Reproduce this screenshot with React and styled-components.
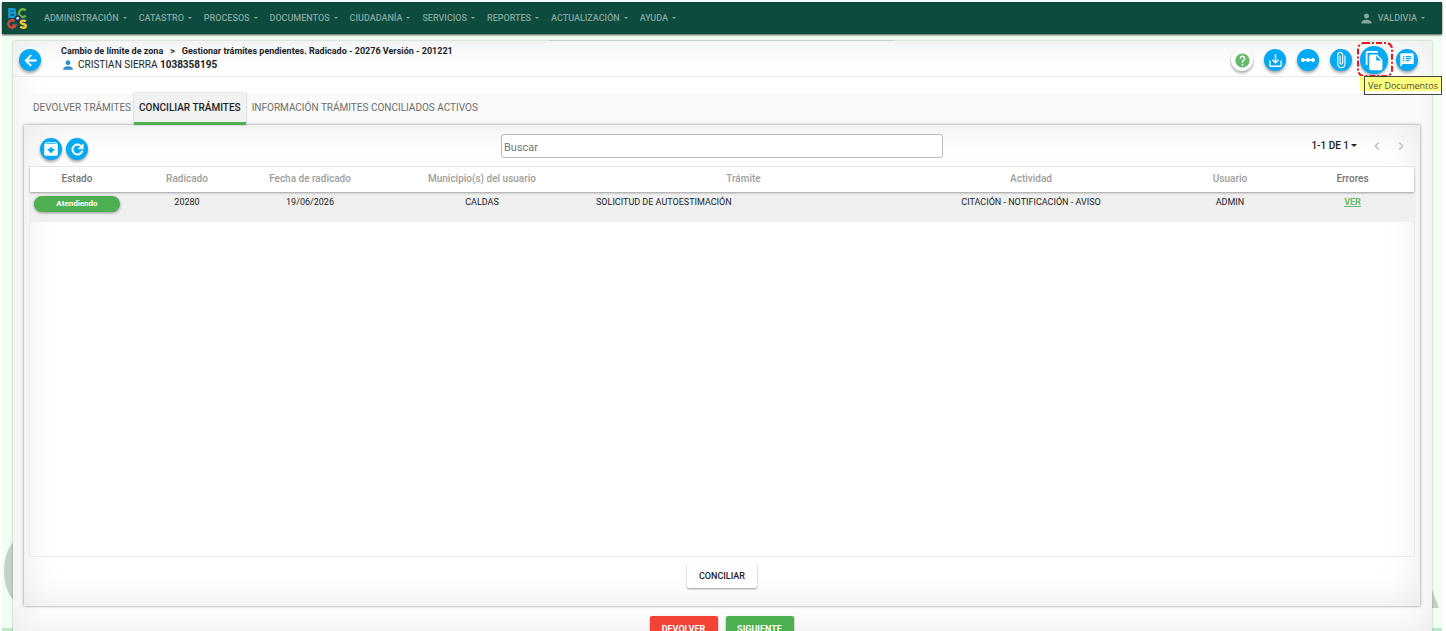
import React from "react";
import styled, { createGlobalStyle } from "styled-components";
import {
  MdArchive,
  MdArrowBack,
  MdAttachFile,
  MdChevronLeft,
  MdChevronRight,
  MdFileCopy,
  MdHelp,
  MdLinearScale,
  MdPerson,
  MdRefresh,
  MdSaveAlt,
  MdSpeakerNotes,
} from "react-icons/md";

const GlobalStyle = createGlobalStyle`
  * { box-sizing: border-box; }
  html, body { margin: 0; background: #fff; overflow: hidden; }
  body { font-family: Roboto, "Liberation Sans", sans-serif; font-size: 10px; color: #212529; }
  button, input { font-family: inherit; }
  button { cursor: pointer; }
`;

const Page = styled.div`
  display: flex;
  flex-direction: column;
  height: 100vh;
  padding: 2px 4px 0 2px;
  overflow: hidden;
`;

const NavBar = styled.header`
  position: relative;
  display: flex;
  align-items: center;
  flex: none;
  height: 32px;
  padding: 0 17px 0 5px;
  background: #0c4b3e;
  box-shadow: 0 1px 2px rgba(0, 0, 0, 0.7);
  z-index: 1;
`;

const Menu = styled.nav`
  display: flex;
  flex: 1;
  gap: 12px;
  margin-left: 16px;
`;

const MenuButton = styled.button`
  display: flex;
  align-items: center;
  gap: 4px;
  padding: 0;
  border: 0;
  background: none;
  color: #86a59f;
  font-size: 9px;
  font-weight: 500;
  line-height: 16px;
  white-space: nowrap;
`;

const Caret = styled.span`
  border: ${(p) => p.$size || 2}px solid transparent;
  border-top-color: currentColor;
  border-bottom: 0;
`;

const Backdrop = styled.div`
  position: relative;
  flex: 1;
  min-height: 0;
  padding: 7px 10px 0 11px;
  background: #f0fff2;
`;

const Watermark = styled.svg`
  position: absolute;
  bottom: 0;
  ${(p) => p.$side}: 0;
  width: 24px;
  height: 90px;
`;

const TopLine = styled.div`
  position: absolute;
  top: 6px;
  left: 38%;
  right: 38%;
  height: 1px;
  background: #d9e8dc;
`;

const Panel = styled.main`
  position: relative;
  height: 100%;
  background: #fff;
  box-shadow: inset 0 0 36px rgba(0, 0, 0, 0.09), 0 0 2px rgba(0, 0, 0, 0.3);
`;

const PanelHeader = styled.div`
  display: flex;
  align-items: center;
  height: 36px;
  padding: 3px 14px 0 6px;
  border-bottom: 1px solid #e9e9e9;
`;

const TitleBlock = styled.div`
  flex: 1;
  margin: 0 0 4px 20px;
  line-height: 14px;
`;

const Title = styled.h1`
  margin: 0;
  font-size: 9px;
  line-height: 14px;
  font-weight: 700;
`;

const Separator = styled.span`
  margin: 0 7px;
`;

const Person = styled.div`
  display: flex;
  align-items: center;
  gap: 3px;
  svg { color: #2b8fd0; }
`;

const Actions = styled.div`
  display: flex;
  align-items: center;
  gap: 11px;
`;

const RoundButton = styled.button`
  display: flex;
  align-items: center;
  justify-content: center;
  flex: none;
  width: ${(p) => p.$size || 22}px;
  height: ${(p) => p.$size || 22}px;
  padding: 0;
  border: 0;
  border-radius: 50%;
  background: ${(p) => (p.$light ? "#fff" : "#03a9f4")};
  color: ${(p) => (p.$light ? "#66bb6a" : "#fff")};
  box-shadow: 0 2px 3px rgba(0, 0, 0, 0.35);
  svg path:not([fill="none"]) {
    stroke: currentColor;
    stroke-width: ${(p) => (p.$bold ? 1 : 0)}px;
  }
`;

const Highlighted = styled.div`
  position: relative;
  display: flex;
  margin: 0 -3px;
`;

const Marker = styled.svg`
  position: absolute;
  top: -4px;
  left: -3px;
  width: 36px;
  height: 36px;
  pointer-events: none;
`;

const Tooltip = styled.div`
  position: absolute;
  top: 30px;
  left: 4px;
  z-index: 2;
  width: 78px;
  height: 19px;
  border: 1px solid #444;
  background: linear-gradient(#ffff80 14px, #fff 14px);
  font: 9px/18px "Open Sans", "Noto Sans", sans-serif;
  color: #4b4b35;
  text-align: center;
  white-space: nowrap;
  &::before {
    content: "";
    position: absolute;
    top: -1px;
    right: 100%;
    width: 4px;
    height: 15px;
    margin-right: 1px;
    background: #ffff80;
  }
`;

const Tabs = styled.div`
  display: flex;
  height: 32px;
  margin: 16px 12px 0 11px;
  background: #fafafa;
`;

const Tab = styled.button`
  padding: 0 ${(p) => (p.$active ? 5 : 6)}px;
  border: 0;
  border-bottom: 3px solid ${(p) => (p.$active ? "#4caf50" : "transparent")};
  background: ${(p) => (p.$active ? "#f2f2f2" : "none")};
  box-shadow: ${(p) => (p.$active ? "0 0 2px rgba(0, 0, 0, 0.3)" : "none")};
  color: ${(p) => (p.$active ? "#212529" : "#6c6c6c")};
  font-size: 10px;
  font-weight: ${(p) => (p.$active ? 500 : 400)};
  white-space: nowrap;
  &:first-child { padding: 0 3px 0 9px; }
`;

const Card = styled.section`
  display: flex;
  flex-direction: column;
  height: 481px;
  margin: 0 12px 0 11px;
  padding: 0 5px;
  background: #fff;
  box-shadow: inset 0 0 36px rgba(0, 0, 0, 0.1), 0 0 3px rgba(0, 0, 0, 0.45);
`;

const Toolbar = styled.div`
  display: grid;
  grid-template-columns: 1fr 442px 1fr;
  align-items: center;
  height: 41px;
  padding: 0 6px;
`;

const ToolGroup = styled.div`
  display: flex;
  gap: 4px;
  padding: 7px 0 0 5px;
`;

const Search = styled.input`
  height: 24px;
  padding: 4px 2px 1px;
  border: 1px solid #b5b9c0;
  border-radius: 3px;
  background: #fff;
  font-size: 11px;
  &::placeholder { color: #757575; opacity: 1; }
`;

const Pager = styled.div`
  display: flex;
  align-items: center;
  justify-content: flex-end;
  gap: 8px;
`;

const PagerButton = styled.button`
  display: flex;
  align-items: center;
  gap: 2px;
  padding: 0;
  border: 0;
  background: none;
  color: ${(p) => (p.disabled ? "#bbb" : "#212121")};
  font-size: 10px;
  font-weight: 500;
  &:first-child { padding-right: 4px; }
`;

const TableFrame = styled.div`
  flex: none;
  height: 391px;
  border: 1px solid #ececec;
`;

const Table = styled.table`
  width: 100%;
  table-layout: fixed;
  border-collapse: collapse;
`;

const Col = styled.col`
  width: ${(p) => p.$width};
`;

const HeadRow = styled.tr`
  position: relative;
  height: 25px;
  background: #fff;
  box-shadow: 0 1px 2px rgba(0, 0, 0, 0.35);
`;

const HeadCell = styled.th`
  padding: 0 0 3px;
  color: ${(p) => (p.$strong ? "#757575" : "#9e9e9e")};
  font-size: 10px;
  font-weight: 500;
`;

const BodyRow = styled.tr`
  height: 30px;
  background: #f0f0f0;
`;

const Cell = styled.td`
  padding: 4px 2px 0;
  text-align: ${(p) => (p.$left ? "left" : "center")};
  vertical-align: top;
  font-size: 9px;
  line-height: 13px;
  white-space: nowrap;
`;

const Status = styled.span`
  display: block;
  width: 86px;
  height: 16px;
  margin-left: 2px;
  border-radius: 8px;
  background: #4caf50;
  color: #fff;
  font-size: 8px;
  line-height: 16px;
  font-weight: 700;
  box-shadow: 0 1px 3px rgba(0, 0, 0, 0.4);
`;

const ErrorLink = styled.a`
  color: #66bb6a;
  font-size: 9px;
  font-weight: 700;
`;

const ActionButton = styled.button`
  width: ${(p) => p.$width}px;
  height: 25px;
  padding: 0;
  border: 0;
  border-radius: 2px;
  background: ${(p) => p.$bg};
  color: ${(p) => p.$fg};
  font-size: 9px;
  font-weight: ${(p) => p.$weight || 500};
  box-shadow: 0 1px 2px rgba(0, 0, 0, 0.4);
`;

const CardFooter = styled.div`
  display: flex;
  justify-content: center;
  padding-top: 6px;
`;

const PageFooter = styled.div`
  display: flex;
  justify-content: center;
  gap: 8px;
  padding: 10px 2px 0 0;
`;

const menus = [
  "ADMINISTRACIÓN",
  "CATASTRO",
  "PROCESOS",
  "DOCUMENTOS",
  "CIUDADANÍA",
  "SERVICIOS",
  "REPORTES",
  "ACTUALIZACIÓN",
  "AYUDA",
];

const columns = [
  { label: "Estado", width: "94px", strong: true },
  { label: "Radicado", width: "126px" },
  { label: "Fecha de radicado", width: "120px" },
  { label: "Municipio(s) del usuario", width: "224px" },
  { label: "Trámite", width: "auto" },
  { label: "Actividad", width: "276px" },
  { label: "Usuario", width: "122px" },
  { label: "Errores", width: "123px", strong: true },
];

function Logo() {
  return (
    <svg width="21" height="24" viewBox="0 0 21 24" fill="none" strokeWidth="2.4" role="img" aria-label="BCGS">
      <path d="M2.4 3.2v7.6h4a2 2 0 0 0 0-4h-4h3.6a1.8 1.8 0 0 0 0-3.6z" stroke="#149bd8" />
      <path d="M18.8 4.6a3.9 3.9 0 1 0 0 5" stroke="#6fae45" />
      <path d="M7.6 15.2a3.7 3.7 0 1 0 .9 4.2H5.4" stroke="#d3473d" />
      <path d="M18.8 15.4c-1.6-1.3-5-1-5 .9 0 2.3 5 1 5 3.6 0 2.2-3.8 2.3-5.6.8" stroke="#f0c63c" />
      <path d="M7.6 12.4a3.1 3.1 0 0 1 6.2 0c0 2-3.1 5-3.1 5s-3.1-3-3.1-5z" fill="#14365f" />
      <circle cx="10.7" cy="12.2" r="1.3" fill="#fff" />
    </svg>
  );
}

export default function App() {
  return (
    <Page>
      <GlobalStyle />
      <NavBar>
        <Logo />
        <Menu>
          {menus.map((name) => (
            <MenuButton key={name}>
              {name}
              <Caret />
            </MenuButton>
          ))}
        </Menu>
        <MenuButton>
          <MdPerson size={15} />
          VALDIVIA
          <Caret />
        </MenuButton>
      </NavBar>
      <Backdrop>
        <Watermark $side="left" viewBox="0 0 24 90" aria-hidden="true">
          <ellipse cx="24" cy="30" rx="22" ry="36" fill="#c4d1c6" />
          <path d="M0 87h24v3H0z" fill="#bde8cb" />
        </Watermark>
        <Watermark $side="right" viewBox="0 0 24 90" aria-hidden="true">
          <path d="M7 30L21 67H7z" fill="#c4d1c6" />
          <path d="M0 87h24v3H0z" fill="#bde8cb" />
        </Watermark>
        <TopLine />
        <Panel>
          <PanelHeader>
            <RoundButton $bold aria-label="Volver">
              <MdArrowBack size={17} />
            </RoundButton>
            <TitleBlock>
              <Title>
                Cambio de límite de zona
                <Separator>&gt;</Separator>
                Gestionar trámites pendientes. Radicado - 20276 Versión - 201221
              </Title>
              <Person>
                <MdPerson size={14} />
                <span>
                  CRISTIAN SIERRA <b>1038358195</b>
                </span>
              </Person>
            </TitleBlock>
            <Actions>
              <RoundButton $light aria-label="Ayuda">
                <MdHelp size={17} />
              </RoundButton>
              <RoundButton aria-label="Descargar">
                <MdSaveAlt size={17} />
              </RoundButton>
              <RoundButton $bold aria-label="Flujo">
                <MdLinearScale size={16} />
              </RoundButton>
              <RoundButton aria-label="Adjuntos">
                <MdAttachFile size={18} />
              </RoundButton>
              <Highlighted>
                <RoundButton $size={28} aria-label="Ver Documentos">
                  <MdFileCopy size={21} />
                </RoundButton>
                <Marker viewBox="0 0 36 36" aria-hidden="true">
                  <rect x="1" y="1" width="34" height="33" rx="6" fill="none" stroke="#f0141e" strokeWidth="2" strokeDasharray="6 2 2 2" />
                </Marker>
                <Tooltip role="tooltip">Ver Documentos</Tooltip>
              </Highlighted>
              <RoundButton aria-label="Observaciones">
                <MdSpeakerNotes size={16} />
              </RoundButton>
            </Actions>
          </PanelHeader>
          <Tabs role="tablist">
            <Tab role="tab">DEVOLVER TRÁMITES</Tab>
            <Tab role="tab" $active aria-selected="true">
              CONCILIAR TRÁMITES
            </Tab>
            <Tab role="tab">INFORMACIÓN TRÁMITES CONCILIADOS ACTIVOS</Tab>
          </Tabs>
          <Card>
            <Toolbar>
              <ToolGroup>
                <RoundButton aria-label="Archivar">
                  <MdArchive size={18} />
                </RoundButton>
                <RoundButton $bold aria-label="Actualizar">
                  <MdRefresh size={17} />
                </RoundButton>
              </ToolGroup>
              <Search type="text" placeholder="Buscar" aria-label="Buscar" />
              <Pager>
                <PagerButton>
                  1-1 DE 1
                  <Caret $size={3} />
                </PagerButton>
                <PagerButton disabled aria-label="Anterior">
                  <MdChevronLeft size={16} />
                </PagerButton>
                <PagerButton disabled aria-label="Siguiente página">
                  <MdChevronRight size={16} />
                </PagerButton>
              </Pager>
            </Toolbar>
            <TableFrame>
              <Table>
                <colgroup>
                  {columns.map((c) => (
                    <Col key={c.label} $width={c.width} />
                  ))}
                </colgroup>
                <thead>
                  <HeadRow>
                    {columns.map((c) => (
                      <HeadCell key={c.label} $strong={c.strong}>
                        {c.label}
                      </HeadCell>
                    ))}
                  </HeadRow>
                </thead>
                <tbody>
                  <BodyRow>
                    <Cell>
                      <Status>Atendiendo</Status>
                    </Cell>
                    <Cell>20280</Cell>
                    <Cell>19/06/2026</Cell>
                    <Cell>CALDAS</Cell>
                    <Cell $left>SOLICITUD DE AUTOESTIMACIÓN</Cell>
                    <Cell>CITACIÓN - NOTIFICACIÓN - AVISO</Cell>
                    <Cell>ADMIN</Cell>
                    <Cell>
                      <ErrorLink href="#ver">VER</ErrorLink>
                    </Cell>
                  </BodyRow>
                </tbody>
              </Table>
            </TableFrame>
            <CardFooter>
              <ActionButton $width={70} $bg="#fff" $fg="#212121">
                CONCILIAR
              </ActionButton>
            </CardFooter>
          </Card>
          <PageFooter>
            <ActionButton $width={68} $bg="#f44336" $fg="#fff" $weight={700}>
              DEVOLVER
            </ActionButton>
            <ActionButton $width={68} $bg="#4caf50" $fg="#fff" $weight={700}>
              SIGUIENTE
            </ActionButton>
          </PageFooter>
        </Panel>
      </Backdrop>
    </Page>
  );
}
